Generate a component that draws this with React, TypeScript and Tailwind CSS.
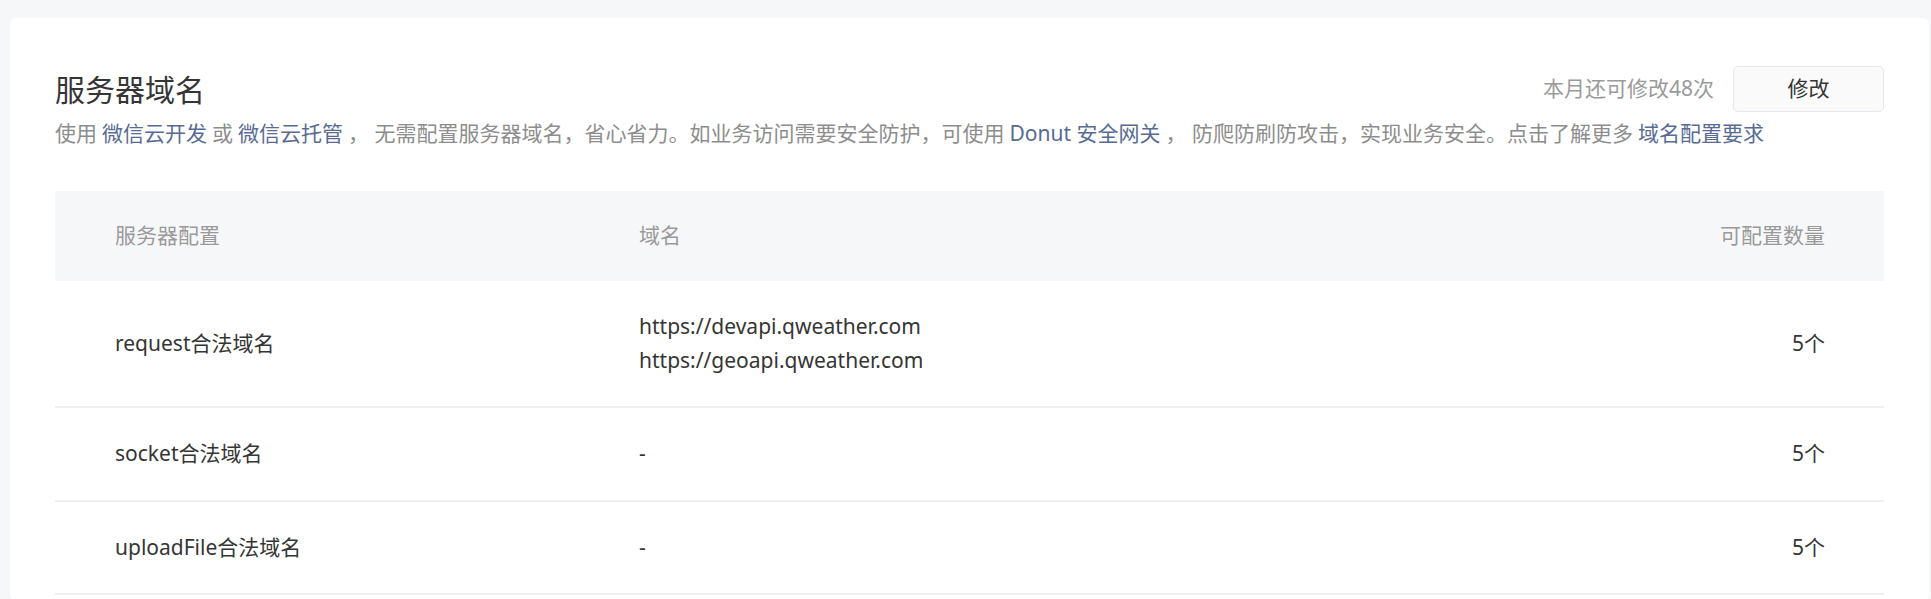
import React from 'react';

type DomainRow = {
  name: string;
  domains: string[];
  count: string;
};

const rows: DomainRow[] = [
  {
    name: 'request合法域名',
    domains: ['https://devapi.qweather.com', 'https://geoapi.qweather.com'],
    count: '5个'
  },
  { name: 'socket合法域名', domains: ['-'], count: '5个' },
  { name: 'uploadFile合法域名', domains: ['-'], count: '5个' }
];

function Link({ children }: { children: React.ReactNode }) {
  return <span className="text-[#576b95] mx-[5px]">{children}</span>;
}

function App() {
  return (
    <div
      className="min-h-screen bg-[#f6f7f9] pt-[18px] pl-[10px] pr-[2px]"
      style={{ fontFamily: '"Noto Sans", "Noto Sans CJK SC", sans-serif' }}
    >
      <div className="bg-white rounded-md px-[45px] pt-[48px] pb-[6px]">
        {/* Header */}
        <div className="flex items-center justify-between h-[46px]">
          <h2 className="text-[30px] leading-[45px] text-[#353535] font-normal">服务器域名</h2>
          <div className="flex items-center">
            <span className="text-[21px] text-[#9a9a9a] mr-[19px]">本月还可修改48次</span>
            <button className="w-[151px] h-[46px] bg-[#fafafa] border border-[#e4e6eb] rounded-[5px] text-[21px] text-[#353535]">
              修改
            </button>
          </div>
        </div>

        {/* Description */}
        <p className="mt-[4px] text-[21px] leading-[34px] text-[#8d8d8d]">
          使用<Link>微信云开发</Link>或<Link>微信云托管</Link>， 无需配置服务器域名，省心省力。如业务访问需要安全防护，可使用<Link>Donut 安全网关</Link>， 防爬防刷防攻击，实现业务安全。点击了解更多<Link>域名配置要求</Link>
        </p>

        {/* Table */}
        <div className="mt-[41px] text-[21px]">
          <div className="grid grid-cols-[524px_1fr_300px] items-center h-[90px] bg-[#f6f7f9] text-[#9a9a9a]">
            <div className="pl-[60px]">服务器配置</div>
            <div className="pl-[60px]">域名</div>
            <div className="pr-[59px] text-right">可配置数量</div>
          </div>
          {rows.map(row => (
            <div
              key={row.name}
              className="grid grid-cols-[524px_1fr_300px] items-center py-[29px] border-b-2 border-[#efefef] text-[#353535] leading-[33.5px]"
            >
              <div className="pl-[60px]">{row.name}</div>
              <div className="pl-[60px]">
                {row.domains.map(d => (
                  <div key={d}>{d}</div>
                ))}
              </div>
              <div className="pr-[59px] text-right">{row.count}</div>
            </div>
          ))}
        </div>
      </div>
    </div>
  );
}

export default App;
